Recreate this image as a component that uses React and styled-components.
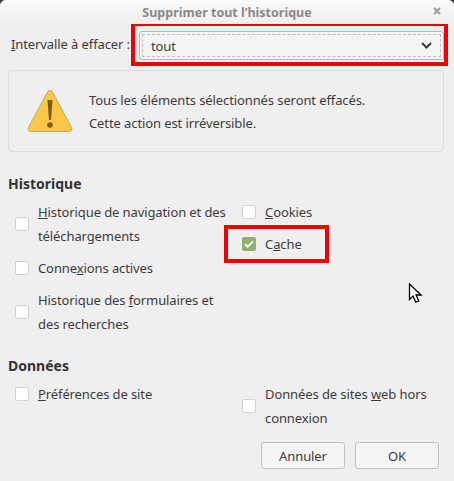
import React from "react";
import styled, { createGlobalStyle } from "styled-components";

const Global = createGlobalStyle`
  html, body {
    margin: 0;
    padding: 0;
    background: #3d3a38;
  }
  * {
    box-sizing: border-box;
  }
`;

const Dialog = styled.div`
  position: relative;
  width: 454px;
  height: 481px;
  overflow: hidden;
  background: #efefef;
  border-radius: 6px 6px 0 0;
  color: #3c3c3c;
  font-family: "Noto Sans", "Open Sans", sans-serif;
  font-size: 13px;
  letter-spacing: -0.1px;
`;

const TitleBar = styled.div`
  position: relative;
  height: 24px;
  padding-top: 4px;
  background: linear-gradient(#fbfbfb, #efefef);
  color: #8a8888;
  font-size: 12.5px;
  font-weight: 700;
  letter-spacing: 0;
  line-height: 17px;
  text-align: center;
`;

const Close = styled.svg`
  position: absolute;
  top: 7px;
  right: 13px;
  width: 8px;
  height: 8px;
`;

const RangeRow = styled.div`
  display: flex;
  align-items: center;
  height: 44px;
  margin-top: -2px;
  padding-left: 11px;
`;

const RangeLabel = styled.label`
  width: 120px;
  flex: none;
  line-height: 20px;
  white-space: nowrap;
`;

const Marked = styled.div`
  display: flex;
  flex: none;
  width: 317px;
  height: 44px;
  border: 4px solid #f00000;
  padding: 5px 0 2px 4px;
`;

const Select = styled.div`
  flex: 1;
  display: flex;
  border: 1px solid #b8b8b8;
  border-radius: 3px;
  background: #f4f4f4;
  padding: 2px;
`;

const SelectInner = styled.div`
  flex: 1;
  display: flex;
  align-items: center;
  justify-content: space-between;
  border: 1px dashed #bdbdbd;
  padding: 0 8px;
`;

const Warning = styled.div`
  display: flex;
  align-items: center;
  height: 82px;
  margin: 4px 10px 0 8px;
  padding-left: 18px;
  border: 1px solid #dcdcdc;
  border-radius: 4px;
`;

const WarningText = styled.div`
  margin: 1px 0 0 16px;
  line-height: 23px;
`;

const Heading = styled.h2`
  margin: 0;
  padding-left: 8px;
  color: #333;
  font-size: 14px;
  font-weight: 700;
  letter-spacing: 0;
  line-height: 20px;
`;

const Section = styled.section`
  margin-top: ${(p) => p.$top}px;
`;

const Columns = styled.div`
  display: grid;
  grid-template-columns: 227px 1fr;
  align-items: start;
  margin-top: 6px;
  padding-left: 15px;
`;

const Column = styled.div`
  display: flex;
  flex-direction: column;
  gap: 8px;
`;

const Option = styled.label`
  display: flex;
  align-items: center;
  gap: 9px;
  line-height: 24px;
  width: ${(p) => p.$width}px;
`;

const Box = styled.span`
  flex: none;
  display: flex;
  align-items: center;
  justify-content: center;
  width: 14px;
  height: 14px;
  border: 1px solid ${(p) => (p.$checked ? "#93ae6d" : "#d2d2d2")};
  border-radius: 2px;
  background: ${(p) => (p.$checked ? "#93ae6d" : "#fff")};
`;

const Buttons = styled.div`
  display: flex;
  justify-content: flex-end;
  gap: 10px;
  margin-top: 12px;
  padding-right: 15px;
`;

const Button = styled.button`
  width: 84px;
  height: 27px;
  padding: 0;
  border: 1px solid #c0c0c0;
  border-radius: 3px;
  background: #f4f4f4;
  color: #3c3c3c;
  font: inherit;
  letter-spacing: inherit;
`;

const CacheMark = styled.div`
  position: absolute;
  left: 224px;
  top: 225px;
  width: 105px;
  height: 38px;
  border: 4px solid #f00000;
`;

const Cursor = styled.svg`
  position: absolute;
  left: 408px;
  top: 283px;
  width: 15px;
  height: 21px;
`;

const Check = () => (
  <svg width="10" height="8" viewBox="0 0 10 8">
    <path d="M1 4l2.6 2.6L9 1.4" fill="none" stroke="#fff" strokeWidth="2" />
  </svg>
);

const Item = ({ width, checked, children }) => (
  <Option $width={width}>
    <Box $checked={checked}>{checked && <Check />}</Box>
    <span>{children}</span>
  </Option>
);

const App = () => (
  <Dialog>
    <Global />
    <TitleBar>
      Supprimer tout l’historique
      <Close viewBox="0 0 8 8">
        <path d="M1 1l6 6M7 1L1 7" stroke="#9a9a9a" strokeWidth="2" />
      </Close>
    </TitleBar>
    <RangeRow>
      <RangeLabel>
        <u>I</u>ntervalle à effacer :
      </RangeLabel>
      <Marked>
        <Select>
          <SelectInner>
            tout
            <svg width="11" height="7" viewBox="0 0 11 7">
              <path d="M1 1l4.5 4.5L10 1" fill="none" stroke="#3c3c3c" strokeWidth="2" />
            </svg>
          </SelectInner>
        </Select>
      </Marked>
    </RangeRow>
    <Warning>
      <svg width="46" height="44" viewBox="0 0 46 44">
        <path
          d="M23 1.5c1.2 0 2 .7 2.700 1.900l18.800 35c1 2 .2 4-2.200 4H3.700c-2.400 0-3.200-2-2.200-4l18.800-35c.7-1.200 1.500-1.900 2.700-1.900z"
          fill="#fbc748"
          stroke="#bda66a"
        />
        <path d="M20.500 11h5l-1.500 20h-2z" fill="#7a5c17" />
        <circle cx="23" cy="36" r="2.800" fill="#7a5c17" />
      </svg>
      <WarningText>
        Tous les éléments sélectionnés seront effacés.
        <br />
        Cette action est irréversible.
      </WarningText>
    </Warning>
    <Section $top={22}>
      <Heading>Historique</Heading>
      <Columns>
        <Column>
          <Item width={214}>
            <u>H</u>istorique de navigation et des téléchargements
          </Item>
          <Item>
            Conne<u>x</u>ions actives
          </Item>
          <Item width={205}>
            Historique des <u>f</u>ormulaires et des recherches
          </Item>
        </Column>
        <Column>
          <Item>
            <u>C</u>ookies
          </Item>
          <Item checked>
            C<u>a</u>che
          </Item>
        </Column>
      </Columns>
    </Section>
    <Section $top={20}>
      <Heading>Données</Heading>
      <Columns>
        <Item>
          <u>P</u>références de site
        </Item>
        <Item width={196}>
          Données de sites <u>w</u>eb hors connexion
        </Item>
      </Columns>
    </Section>
    <Buttons>
      <Button>Annuler</Button>
      <Button>OK</Button>
    </Buttons>
    <CacheMark />
    <Cursor viewBox="0 0 15 21">
      <path
        d="M1.500 1v15.500l3.600-3.400 2.600 6 3-1.300-2.600-5.800h5z"
        fill="#fff"
        stroke="#000"
        strokeWidth="1.300"
      />
    </Cursor>
  </Dialog>
);

export default App;
